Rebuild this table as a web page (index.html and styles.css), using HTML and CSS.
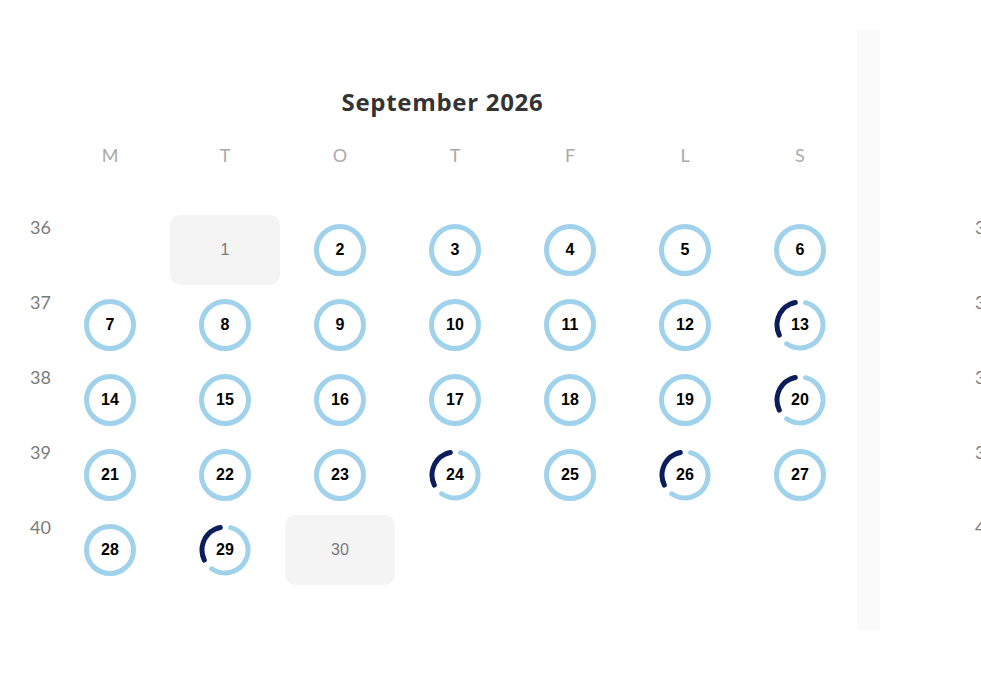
FILE: index.html
```html
<!DOCTYPE html>
<html>
<head>
<meta charset="utf-8">
<link rel="stylesheet" href="styles.css">
</head>
<body>
<svg width="0" height="0" class="defs">
  <defs>
    <symbol id="ring" viewBox="0 0 52 52">
      <circle cx="26" cy="26" r="23.5" fill="none" stroke="#a0d2ec" stroke-width="5"/>
    </symbol>
    <symbol id="arc" viewBox="0 0 52 52">
      <circle cx="26" cy="26" r="23" fill="none" stroke="#a0d2ec" stroke-width="5" stroke-linecap="round" stroke-dasharray="80.3 200" transform="rotate(-76 26 26)"/>
      <circle cx="26" cy="26" r="23" fill="none" stroke="#0b1d5a" stroke-width="5" stroke-linecap="round" stroke-dasharray="41.7 200" transform="rotate(154 26 26)"/>
    </symbol>
  </defs>
</svg>
<div class="strip-row">
  <section class="month">
    <h2 class="title">September 2026</h2>
    <div class="grid head">
      <span></span>
      <span class="dow">M</span><span class="dow">T</span><span class="dow">O</span><span class="dow">T</span><span class="dow">F</span><span class="dow">L</span><span class="dow">S</span>
    </div>
    <div class="grid body-grid">
      <span class="wk">36</span>
      <div class="cell"></div>
      <div class="cell"><div class="off">1</div></div>
      <div class="cell"><div class="day"><svg><use href="#ring"/></svg><b>2</b></div></div>
      <div class="cell"><div class="day"><svg><use href="#ring"/></svg><b>3</b></div></div>
      <div class="cell"><div class="day"><svg><use href="#ring"/></svg><b>4</b></div></div>
      <div class="cell"><div class="day"><svg><use href="#ring"/></svg><b>5</b></div></div>
      <div class="cell"><div class="day"><svg><use href="#ring"/></svg><b>6</b></div></div>

      <span class="wk">37</span>
      <div class="cell"><div class="day"><svg><use href="#ring"/></svg><b>7</b></div></div>
      <div class="cell"><div class="day"><svg><use href="#ring"/></svg><b>8</b></div></div>
      <div class="cell"><div class="day"><svg><use href="#ring"/></svg><b>9</b></div></div>
      <div class="cell"><div class="day"><svg><use href="#ring"/></svg><b>10</b></div></div>
      <div class="cell"><div class="day"><svg><use href="#ring"/></svg><b>11</b></div></div>
      <div class="cell"><div class="day"><svg><use href="#ring"/></svg><b>12</b></div></div>
      <div class="cell"><div class="day"><svg><use href="#arc"/></svg><b>13</b></div></div>

      <span class="wk">38</span>
      <div class="cell"><div class="day"><svg><use href="#ring"/></svg><b>14</b></div></div>
      <div class="cell"><div class="day"><svg><use href="#ring"/></svg><b>15</b></div></div>
      <div class="cell"><div class="day"><svg><use href="#ring"/></svg><b>16</b></div></div>
      <div class="cell"><div class="day"><svg><use href="#ring"/></svg><b>17</b></div></div>
      <div class="cell"><div class="day"><svg><use href="#ring"/></svg><b>18</b></div></div>
      <div class="cell"><div class="day"><svg><use href="#ring"/></svg><b>19</b></div></div>
      <div class="cell"><div class="day"><svg><use href="#arc"/></svg><b>20</b></div></div>

      <span class="wk">39</span>
      <div class="cell"><div class="day"><svg><use href="#ring"/></svg><b>21</b></div></div>
      <div class="cell"><div class="day"><svg><use href="#ring"/></svg><b>22</b></div></div>
      <div class="cell"><div class="day"><svg><use href="#ring"/></svg><b>23</b></div></div>
      <div class="cell"><div class="day"><svg><use href="#arc"/></svg><b>24</b></div></div>
      <div class="cell"><div class="day"><svg><use href="#ring"/></svg><b>25</b></div></div>
      <div class="cell"><div class="day"><svg><use href="#arc"/></svg><b>26</b></div></div>
      <div class="cell"><div class="day"><svg><use href="#ring"/></svg><b>27</b></div></div>

      <span class="wk">40</span>
      <div class="cell"><div class="day"><svg><use href="#ring"/></svg><b>28</b></div></div>
      <div class="cell"><div class="day"><svg><use href="#arc"/></svg><b>29</b></div></div>
      <div class="cell"><div class="off">30</div></div>
    </div>
  </section>
  <div class="divider"></div>
  <section class="month next">
    <div class="grid body-grid">
      <span class="wk">36</span>
      <span class="wk">37</span>
      <span class="wk">38</span>
      <span class="wk">39</span>
      <span class="wk">40</span>
    </div>
  </section>
</div>
</body>
</html>
```
FILE: styles.css
```css
html, body {
  margin: 0;
  padding: 0;
  background: #fff;
  overflow: hidden;
}
body {
  width: 981px;
  height: 678px;
  font-family: "Lato", "Liberation Sans", sans-serif;
}
.defs {
  position: absolute;
  width: 0;
  height: 0;
}
.strip-row {
  display: flex;
  align-items: flex-start;
  width: 2000px;
}
.month {
  width: 825px;
  padding-left: 30px;
  flex: none;
}
.title {
  margin: 0;
  padding-top: 87px;
  height: 30px;
  line-height: 30px;
  font-family: "Open Sans", "Lato", sans-serif;
  font-size: 24px;
  font-weight: 700;
  color: #333;
  text-align: center;
  letter-spacing: 0.7px;
}
.grid {
  display: grid;
  grid-template-columns: 20px repeat(7, 110px);
  column-gap: 5px;
}
.head {
  margin-top: 28px;
  height: 20px;
}
.dow {
  text-align: center;
  line-height: 20px;
  font-size: 18px;
  color: #aaa;
}
.body-grid {
  margin-top: 50px;
  grid-auto-rows: 70px;
  row-gap: 5px;
}
.wk {
  grid-column: 1;
  font-size: 18px;
  line-height: 20px;
  padding-top: 2px;
  color: #7b7b7b;
  white-space: nowrap;
}
.cell {
  display: flex;
  align-items: center;
  justify-content: center;
}
.off {
  width: 110px;
  height: 70px;
  border-radius: 10px;
  background: #f4f4f4;
  display: flex;
  align-items: center;
  justify-content: center;
  font-family: "Liberation Sans", Arial, sans-serif;
  font-size: 16px;
  color: #7a7a7a;
}
.day {
  width: 52px;
  height: 52px;
  display: grid;
  place-items: center;
}
.day svg, .day b {
  grid-area: 1 / 1;
}
.day svg {
  width: 52px;
  height: 52px;
}
.day b {
  font-family: "Liberation Sans", Arial, sans-serif;
  font-weight: 700;
  font-size: 16px;
  color: #000;
}
.divider {
  flex: none;
  width: 23px;
  height: 600px;
  margin-top: 30px;
  margin-left: 2px;
  background: #fafafa;
}
.next {
  padding-left: 95px;
}
.next .body-grid {
  margin-top: 215px;
}
```
